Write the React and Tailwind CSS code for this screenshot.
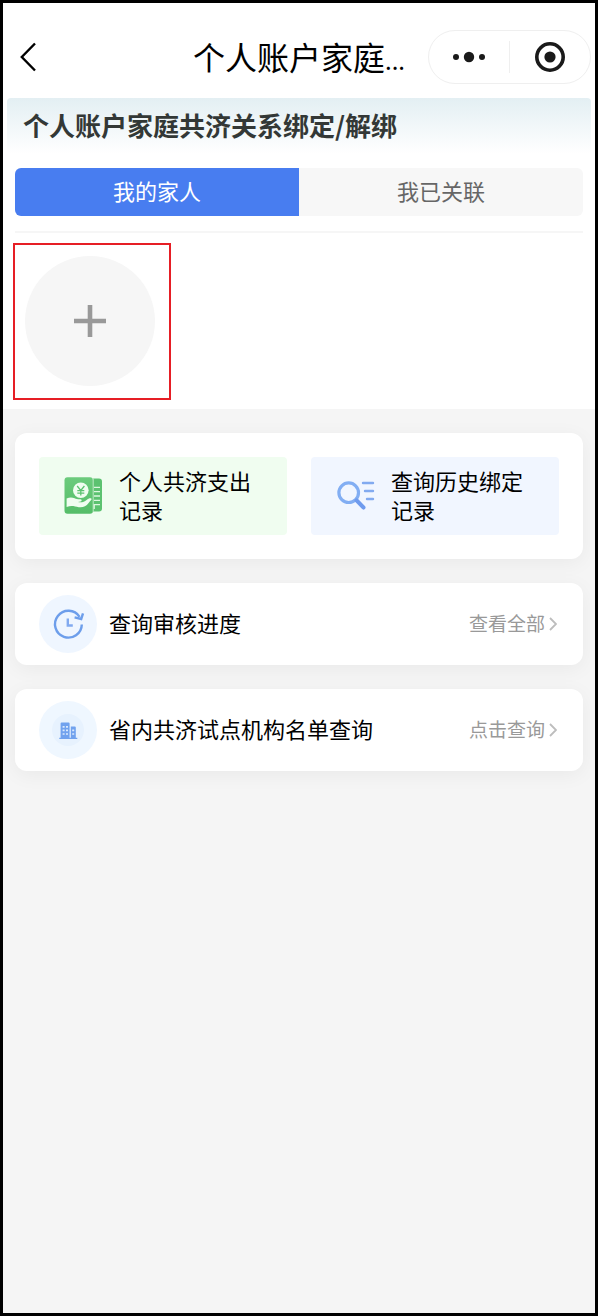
import React, { useState } from "react";

const BackIcon = () => (
  <svg className="w-4 h-[30px]" viewBox="0 0 16 30" fill="none" stroke="#000" strokeWidth="2.4">
    <path d="M15 1.5 1.8 15 15 28.5" />
  </svg>
);

const MoreIcon = () => (
  <svg className="w-9 h-3" viewBox="0 0 36 12" fill="#1a1a1a">
    <circle cx="5" cy="6" r="3" />
    <circle cx="18" cy="6" r="5.2" />
    <circle cx="31" cy="6" r="3" />
  </svg>
);

const CloseIcon = () => (
  <svg className="w-8 h-8" viewBox="0 0 32 32">
    <circle cx="16" cy="16" r="13.2" fill="none" stroke="#1a1a1a" strokeWidth="3.6" />
    <circle cx="16" cy="16" r="5.6" fill="#1a1a1a" />
  </svg>
);

const PlusIcon = () => (
  <svg className="w-8 h-8" viewBox="0 0 32 32" stroke="#999" strokeWidth="4.6">
    <path d="M0 16h32M16 0v32" />
  </svg>
);

const ChevronIcon = () => (
  <svg className="w-2 h-4" viewBox="0 0 8 16" fill="none" stroke="#bdbdbd" strokeWidth="1.8">
    <path d="M1 2l6 6-6 6" />
  </svg>
);

const ExpenseIcon = () => (
  <svg className="w-10 h-10 shrink-0" viewBox="0 0 40 40">
    <defs>
      <linearGradient id="book" x1="0" y1="0" x2="0" y2="1">
        <stop offset="0" stopColor="#6bcb7c" />
        <stop offset="1" stopColor="#55bd68" />
      </linearGradient>
    </defs>
    <path d="M30 2.5h6a3 3 0 0 1 3 3v27a3 3 0 0 1-3 3h-6z" fill="#5cc270" />
    <rect x="1.5" y="1.3" width="28.5" height="36.4" rx="3" fill="url(#book)" />
    <path d="M30.2 2.5v33" stroke="#d5f4d9" strokeWidth="0.8" />
    <path
      d="M31 11.3h6M31 15.7h6M31 20h6M31 24.3h6M31 28.7h6M31.2 28v5"
      stroke="#dcf7df"
      strokeWidth="1.3"
    />
    <circle cx="17.8" cy="14.3" r="7.8" fill="#f0fdf0" />
    <path
      d="M14.2 10l3.6 4.4 3.6-4.4M17.8 14.4v5M14.3 14.6h7M14.3 17.2h7"
      fill="none"
      stroke="#5cc270"
      strokeWidth="1.3"
    />
    <path
      d="M3.6 22.4c3-1.4 5.6-1.2 8-.2 1.6.8 3.2 1.2 5.6 1.1 1.8 0 2 1.8.4 2.2l-2.6.6c3.6.7 6.4-.3 8.6-2.2 2.2-2 5-2 5-.8 0 .8-1.4 1.7-3 3.9-2.6 3.4-5.8 4.8-9.8 4.2-4-.6-7-2-12.2-.2z"
      fill="#f0fdf0"
    />
  </svg>
);

const HistoryIcon = () => (
  <svg className="w-10 h-10 shrink-0" viewBox="0 0 40 40" fill="none" strokeLinecap="round">
    <circle cx="13.7" cy="16.7" r="9.8" stroke="#82aef3" strokeWidth="3.2" />
    <path d="M21.6 24.4l6.8 7" stroke="#6f9bee" strokeWidth="4.2" />
    <path d="M28 7h10M30 15h8M32 23h6" stroke="#82aaf0" strokeWidth="2.4" />
  </svg>
);

const ProgressIcon = () => (
  <svg className="w-[58px] h-[58px]" viewBox="0 0 58 58" fill="none">
    <circle cx="29" cy="29" r="29" fill="#eff6ff" />
    <path d="M42.8 29.4A13.4 13.4 0 1 1 40.6 21.8" stroke="#6d9eeb" strokeWidth="2.4" />
    <path d="M35.6 22.4l6.6 1.6 1.8-5.6" stroke="#6d9eeb" strokeWidth="2.4" />
    <path d="M28.8 23.6v6.9h5" stroke="#82aaf0" strokeWidth="2.4" />
  </svg>
);

const BuildingIcon = () => (
  <svg className="w-[58px] h-[58px]" viewBox="0 0 58 58">
    <circle cx="29" cy="29" r="29" fill="#eff7ff" />
    <circle cx="29" cy="29" r="16" fill="#e7f2fe" />
    <path d="M21.6 22.6q0-1 1-1h7q1 0 1 1v14.2h1.2V25.6h4q1 0 1 1v10.2h1.5V38h-18v-1.2h1.3z" fill="#71a2ee" />
    <path
      d="M23.6 25.8h2M27 25.8h2M23.6 29.4h2M27 29.4h2M23.6 33h2M27 33h2M33.2 29.4h2M33.2 33h2"
      stroke="#d9e9fd"
      strokeWidth="1.7"
    />
  </svg>
);

const tabs = ["我的家人", "我已关联"];

const rows = [
  { title: "查询审核进度", action: "查看全部", Icon: ProgressIcon },
  { title: "省内共济试点机构名单查询", action: "点击查询", Icon: BuildingIcon },
];

const App = () => {
  const [active, setActive] = useState(0);

  return (
    <div className="bg-white pr-[2px]">
      <div className="min-h-screen border-[3px] border-black bg-[#f5f5f5] text-black font-['Noto_Sans_CJK_SC',sans-serif]">
        <div className="bg-white pb-[9px]">
          <header className="grid grid-cols-[1fr_auto_1fr] items-center pt-[27px] pb-[14px] px-1">
            <button aria-label="返回" className="justify-self-start pl-[13px]">
              <BackIcon />
            </button>
            <h1 className="text-[32px] leading-[52px] pb-[2px] whitespace-nowrap">
              个人账户家庭<span className="text-2xl">...</span>
            </h1>
            <div className="justify-self-end flex items-center w-[163px] h-[54px] rounded-full border border-[#efefef]">
              <button aria-label="更多" className="flex-1 flex justify-center">
                <MoreIcon />
              </button>
              <span className="w-px h-8 bg-[#efefef]" />
              <button aria-label="关闭" className="flex-1 flex justify-center">
                <CloseIcon />
              </button>
            </div>
          </header>

          <h2 className="mx-1 px-4 h-14 rounded-t bg-linear-to-b from-[#e3eff3] to-white text-[26px] leading-[54px] font-bold text-[#333836]">
            个人账户家庭共济关系绑定/解绑
          </h2>

          <div className="mx-3 mt-[14px] pb-[15px] border-b-2 border-[#f6f6f6]">
            <div className="flex rounded-md overflow-hidden bg-[#f7f7f7]">
              {tabs.map((tab, i) => (
                <button
                  key={tab}
                  onClick={() => setActive(i)}
                  className={`flex-1 h-12 pb-[3px] text-[22px] ${
                    active === i ? "bg-[#487df0] text-white" : "text-[#666]"
                  }`}
                >
                  {tab}
                </button>
              ))}
            </div>
          </div>

          <div className="px-[10px] pt-[10px]">
            <div className="inline-flex align-top border-2 border-[#e61e25] pt-[11px] pb-3 pl-[10px] pr-[14px]">
              <button
                aria-label="添加家人"
                className="w-[130px] h-[130px] rounded-full bg-[#f6f6f6] flex items-center justify-center"
              >
                <PlusIcon />
              </button>
            </div>
          </div>
        </div>

        <main className="flex flex-col gap-6 px-3 py-6">
          <section className="grid grid-cols-2 gap-6 p-6 rounded-xl bg-white shadow-[0_4px_20px_rgba(0,0,0,0.05)]">
            <button className="flex items-center gap-4 px-6 py-[9px] rounded bg-[#f0fdf0] text-left text-[22px] leading-[29px]">
              <ExpenseIcon />
              <span className="pb-[2px]">个人共济支出记录</span>
            </button>
            <button className="flex items-center gap-4 px-6 py-[9px] rounded bg-[#f1f6ff] text-left text-[22px] leading-[29px]">
              <HistoryIcon />
              <span className="pb-[2px]">查询历史绑定记录</span>
            </button>
          </section>

          {rows.map(({ title, action, Icon }) => (
            <a
              key={title}
              href="#"
              className="flex items-center pl-6 pr-[26px] py-3 rounded-xl bg-white shadow-[0_4px_20px_rgba(0,0,0,0.05)]"
            >
              <Icon />
              <span className="ml-3 pb-1 flex-1 text-[22px] leading-[29px]">{title}</span>
              <span className="mr-1 pb-[3px] text-[19px] leading-[29px] text-[#999]">{action}</span>
              <ChevronIcon />
            </a>
          ))}
        </main>
      </div>
    </div>
  );
};

export default App;
